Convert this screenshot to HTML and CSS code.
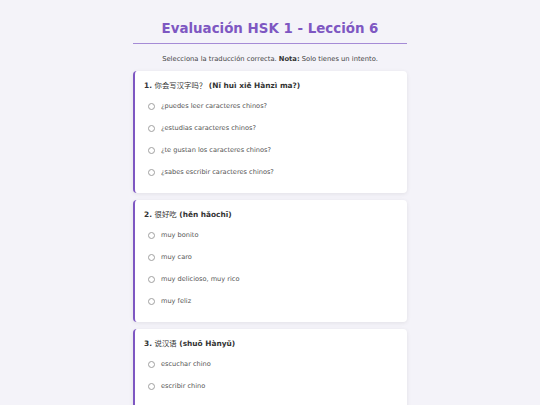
FILE: index.html
```html
<!DOCTYPE html>
<html lang="es">
<head>
<meta charset="utf-8">
<title>Evaluación HSK 1 - Lección 6</title>
<link rel="stylesheet" href="styles.css">
</head>
<body>
<div class="container">
  <h1 class="title">Evaluación HSK 1 - Lección 6</h1>
  <p class="intro">Selecciona la traducción correcta. <strong>Nota:</strong> Solo tienes un intento.</p>

  <div class="card">
    <div class="question">1. <span class="zh">你会写汉字吗？</span> (Nǐ huì xiě Hànzì ma?)</div>
    <div class="option"><span class="radio"></span><span>¿puedes leer caracteres chinos?</span></div>
    <div class="option"><span class="radio"></span><span>¿estudias caracteres chinos?</span></div>
    <div class="option"><span class="radio"></span><span>¿te gustan los caracteres chinos?</span></div>
    <div class="option"><span class="radio"></span><span>¿sabes escribir caracteres chinos?</span></div>
  </div>

  <div class="card">
    <div class="question">2. <span class="zh">很好吃</span> (hěn hǎochī)</div>
    <div class="option"><span class="radio"></span><span>muy bonito</span></div>
    <div class="option"><span class="radio"></span><span>muy caro</span></div>
    <div class="option"><span class="radio"></span><span>muy delicioso, muy rico</span></div>
    <div class="option"><span class="radio"></span><span>muy feliz</span></div>
  </div>

  <div class="card">
    <div class="question">3. <span class="zh">说汉语</span> (shuō Hànyǔ)</div>
    <div class="option"><span class="radio"></span><span>escuchar chino</span></div>
    <div class="option"><span class="radio"></span><span>escribir chino</span></div>
    <div class="option"><span class="radio"></span><span>hablar chino</span></div>
    <div class="option"><span class="radio"></span><span>leer chino</span></div>
  </div>
</div>
</body>
</html>
```

FILE: styles.css
```css
html, body {
  margin: 0;
  padding: 0;
  background: #f4f3f9;
}
body {
  font-family: "DejaVu Sans", Verdana, "Noto Sans CJK SC", sans-serif;
  color: #333;
  padding-top: 21px;
}
.container {
  width: 274px;
  margin: 0 auto;
}
.title {
  margin: 0;
  font-size: 13.4px;
  line-height: 16px;
  font-weight: bold;
  color: #7e57c2;
  text-align: center;
  padding-bottom: 6px;
  border-bottom: 1.5px solid #a58bd6;
}
.intro {
  margin: 11px 0 8px;
  font-size: 6.75px;
  line-height: 8px;
  text-align: center;
  color: #444;
}
.intro strong {
  color: #333;
}
.card {
  background: #fff;
  border-left: 2px solid #7e57c2;
  border-radius: 4px;
  box-shadow: 0 1px 4px rgba(0, 0, 0, 0.08);
  padding: 9px 9px 10px 9px;
  margin-bottom: 7px;
}
.question {
  font-size: 7.4px;
  line-height: 10px;
  font-weight: bold;
  color: #333;
  margin-bottom: 4px;
}
.zh {
  font-family: "Noto Sans CJK SC", sans-serif;
  font-weight: normal;
}
.option {
  display: flex;
  align-items: center;
  height: 22px;
  padding-left: 4px;
  font-size: 6.6px;
  color: #555;
}
.radio {
  box-sizing: border-box;
  width: 7px;
  height: 7px;
  border: 1px solid #a0a0a0;
  border-radius: 50%;
  margin-right: 6px;
  flex-shrink: 0;
}
```
